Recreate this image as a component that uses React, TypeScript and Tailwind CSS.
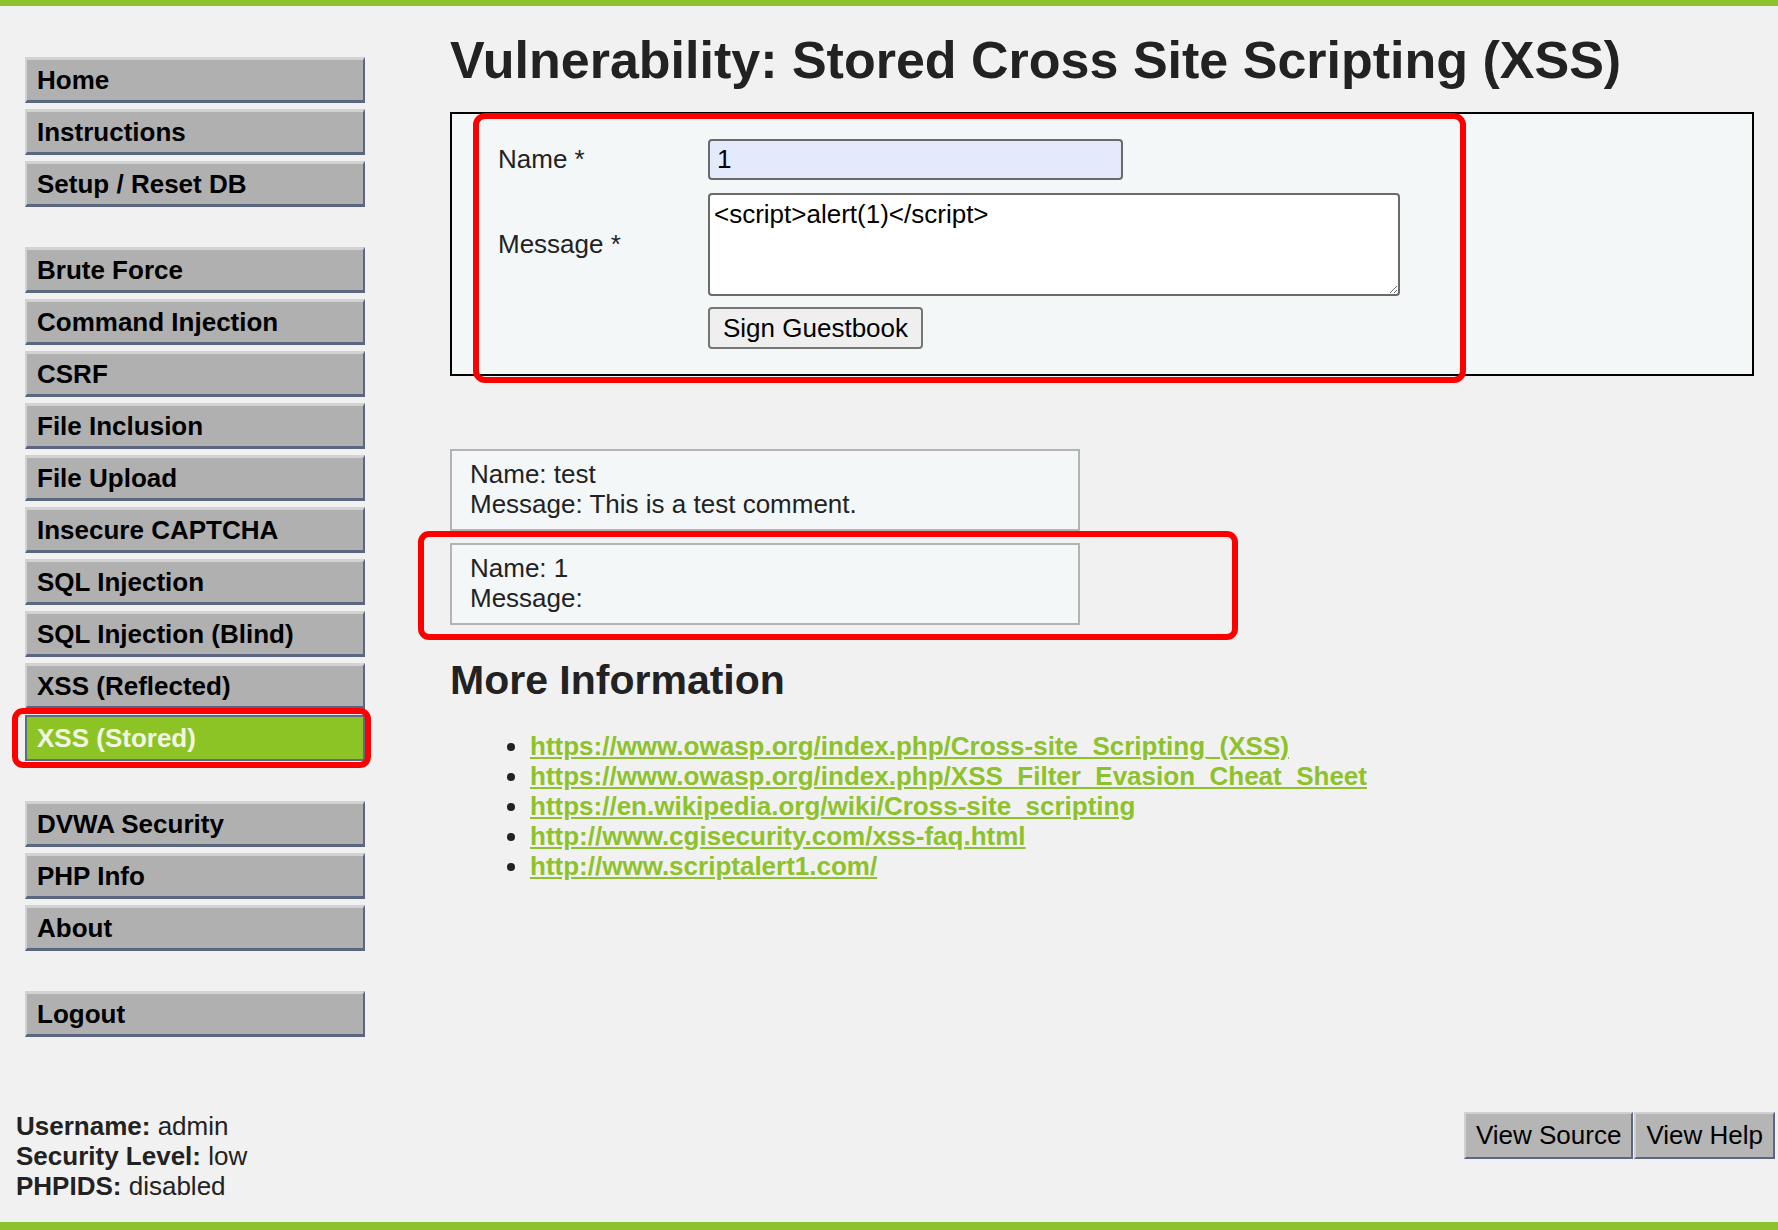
import React from "react";

const group1 = ["Home", "Instructions", "Setup / Reset DB"];
const group2 = [
  "Brute Force",
  "Command Injection",
  "CSRF",
  "File Inclusion",
  "File Upload",
  "Insecure CAPTCHA",
  "SQL Injection",
  "SQL Injection (Blind)",
  "XSS (Reflected)",
  "XSS (Stored)",
];
const group3 = ["DVWA Security", "PHP Info", "About"];
const group4 = ["Logout"];

const links = [
  "https://www.owasp.org/index.php/Cross-site_Scripting_(XSS)",
  "https://www.owasp.org/index.php/XSS_Filter_Evasion_Cheat_Sheet",
  "https://en.wikipedia.org/wiki/Cross-site_scripting",
  "http://www.cgisecurity.com/xss-faq.html",
  "http://www.scriptalert1.com/",
];

function NavItem({ label, active }: { label: string; active?: boolean }) {
  if (active) {
    return (
      <div className="relative">
        <div className="h-[46px] flex items-center pl-[10px] bg-[#8cc425] border-2 border-[#5d6b8a] text-[#f3f5e4] text-[26px] font-bold">
          {label}
        </div>
        <div className="absolute left-[-13px] top-[-7px] w-[359px] h-[60px] border-[6px] border-[#ff0000] rounded-[11px] pointer-events-none" />
      </div>
    );
  }
  return (
    <div className="h-[46px] flex items-center pl-[10px] bg-[#b0b0b0] border-t-[3px] border-l-2 border-r-2 border-b-[3px] border-t-[#d2d2d2] border-l-[#d2d2d2] border-r-[#5b6780] border-b-[#5b6780] text-black text-[26px] font-bold">
      {label}
    </div>
  );
}

function NavGroup({ items }: { items: string[] }) {
  return (
    <div className="flex flex-col gap-[6px]">
      {items.map((l) => (
        <NavItem key={l} label={l} active={l === "XSS (Stored)"} />
      ))}
    </div>
  );
}

export default function App() {
  return (
    <div className="min-h-screen flex flex-col bg-[#f1f1f1] font-['Liberation_Sans',Arial,sans-serif] text-[#222]">
      <div className="h-[6px] bg-[#8dc22a]" />
      <div className="flex-1 flex pl-[25px]">
        <nav className="w-[340px] shrink-0 flex flex-col gap-[40px] pt-[51px]">
          <NavGroup items={group1} />
          <NavGroup items={group2} />
          <NavGroup items={group3} />
          <NavGroup items={group4} />
        </nav>
        <main className="flex-1 ml-[85px] mr-[24px] pt-[24px]">
          <h1 className="text-[52px] leading-[60px] font-bold text-[#222]">
            Vulnerability: Stored Cross Site Scripting (XSS)
          </h1>

          <div className="relative mt-[22px] border-2 border-black bg-[#f4f7f8] pt-[25px] pb-[25px] pl-[46px]">
            <div className="flex items-center h-[41px]">
              <div className="w-[210px] text-[26px]">Name *</div>
              <input
                readOnly
                value="1"
                className="w-[415px] h-[41px] bg-[#e2eafc] border-2 border-[#6a6a6a] rounded-[4px] px-[7px] text-[26px] text-black outline-none"
              />
            </div>
            <div className="flex items-center mt-[13px]">
              <div className="w-[210px] text-[26px]">Message *</div>
              <textarea
                readOnly
                value="<script>alert(1)</script>"
                className="w-[692px] h-[103px] bg-white border-2 border-[#6a6a6a] rounded-[4px] pt-[4px] px-[4px] text-[26px] leading-[30px] text-black outline-none"
              />
            </div>
            <div className="mt-[11px] pl-[210px]">
              <button className="h-[42px] px-[13px] border-2 border-[#767676] rounded-[4px] bg-[#efefef] text-[26px] text-black">
                Sign Guestbook
              </button>
            </div>
            <div className="absolute left-[21px] top-[-1px] w-[993px] h-[270px] border-[6px] border-[#ff0000] rounded-[12px] pointer-events-none" />
          </div>

          <div className="mt-[73px] w-[630px]">
            <div className="border-2 border-[#b3b3b3] bg-[#f4f7f8] pt-[8px] pb-[10px] pl-[18px] text-[26px] leading-[30px] text-[#222]">
              <div>Name: test</div>
              <div>Message: This is a test comment.</div>
            </div>
            <div className="relative mt-[12px] border-2 border-[#b3b3b3] bg-[#f4f7f8] pt-[8px] pb-[10px] pl-[18px] text-[26px] leading-[30px] text-[#222]">
              <div>Name: 1</div>
              <div>Message: </div>
              <div className="absolute left-[-34px] top-[-14px] w-[820px] h-[109px] border-[6px] border-[#ff0000] rounded-[11px] pointer-events-none" />
            </div>
          </div>

          <h2 className="mt-[32px] text-[41px] leading-[47px] font-bold text-[#222]">
            More Information
          </h2>
          <ul className="mt-[27px] list-disc pl-[80px] text-[26px] leading-[30px] text-[#222]">
            {links.map((l) => (
              <li key={l}>
                <a href="#" className="font-bold text-[#8dc22a] underline">
                  {l}
                </a>
              </li>
            ))}
          </ul>
        </main>
      </div>
      <div className="flex justify-between items-start pl-[16px] pr-[3px] pb-[21px]">
        <div className="text-[26px] leading-[30px] text-[#222]">
          <div>
            <span className="font-bold">Username:</span> admin
          </div>
          <div>
            <span className="font-bold">Security Level:</span> low
          </div>
          <div>
            <span className="font-bold">PHPIDS:</span> disabled
          </div>
        </div>
        <div className="flex gap-[1px] mt-[1px]">
          <button className="h-[47px] px-[10px] bg-[#b5b5b5] border-2 border-t-[#d0d0d0] border-l-[#d0d0d0] border-r-[#5b6780] border-b-[#5b6780] text-[26px] text-black">
            View Source
          </button>
          <button className="h-[47px] px-[10px] bg-[#b5b5b5] border-2 border-t-[#d0d0d0] border-l-[#d0d0d0] border-r-[#5b6780] border-b-[#5b6780] text-[26px] text-black">
            View Help
          </button>
        </div>
      </div>
      <div className="h-[8px] bg-[#8dc22a]" />
    </div>
  );
}
